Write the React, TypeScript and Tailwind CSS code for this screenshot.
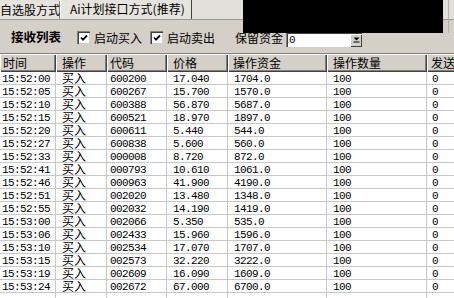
import React from "react";

const rows: [string, string, string, string, string, string, string][] = [
  ["15:52:00", "买入", "600200", "17.040", "1704.0", "100", "0"],
  ["15:52:05", "买入", "600267", "15.700", "1570.0", "100", "0"],
  ["15:52:10", "买入", "600388", "56.870", "5687.0", "100", "0"],
  ["15:52:15", "买入", "600521", "18.970", "1897.0", "100", "0"],
  ["15:52:20", "买入", "600611", "5.440", "544.0", "100", "0"],
  ["15:52:27", "买入", "600838", "5.600", "560.0", "100", "0"],
  ["15:52:33", "买入", "000008", "8.720", "872.0", "100", "0"],
  ["15:52:41", "买入", "000793", "10.610", "1061.0", "100", "0"],
  ["15:52:46", "买入", "000963", "41.900", "4190.0", "100", "0"],
  ["15:52:51", "买入", "002020", "13.480", "1348.0", "100", "0"],
  ["15:52:55", "买入", "002032", "14.190", "1419.0", "100", "0"],
  ["15:53:00", "买入", "002066", "5.350", "535.0", "100", "0"],
  ["15:53:06", "买入", "002433", "15.960", "1596.0", "100", "0"],
  ["15:53:10", "买入", "002534", "17.070", "1707.0", "100", "0"],
  ["15:53:15", "买入", "002573", "32.220", "3222.0", "100", "0"],
  ["15:53:19", "买入", "002609", "16.090", "1609.0", "100", "0"],
  ["15:53:24", "买入", "002672", "67.000", "6700.0", "100", "0"],
];

const headers = ["时间", "操作", "代码", "价格", "操作资金", "操作数量", "发送"];
const pads = ["pl-[2px]", "pl-[6px]", "pl-[3px]", "pl-[6px]", "pl-[6px]", "pl-[6px]", "pl-[5px]"];
const hpads = ["pl-[3px]", "pl-[6px]", "pl-[3px]", "pl-[6px]", "pl-[5px]", "pl-[6px]", "pl-[4px]"];

const cjk = "font-['Noto_Sans_CJK_SC',sans-serif]";
const mono = "font-['Liberation_Mono',monospace]";

function CheckBox() {
  return (
    <div className="w-[13px] h-[13px] bg-white border-t border-l border-[#808080] shadow-[inset_1px_1px_0_#404040,inset_-1px_-1px_0_#d4d0c8] flex items-center justify-center">
      <svg width="8" height="8" viewBox="0 0 8 8">
        <path d="M1 3.5 L3 5.6 L7 1.5" stroke="#000" strokeWidth="1.8" fill="none" />
      </svg>
    </div>
  );
}

export default function App() {
  return (
    <div className={`relative w-[454px] h-[298px] overflow-hidden bg-[#d4d0c8] text-black ${cjk}`}>
      {/* tab strip */}
      <div className="h-[20px] flex items-end bg-[#e2e0da] border-b border-[#9a9890]">
        <div className="w-[60px] h-[18px] flex items-center text-[12px] leading-none border-r border-[#808080] bg-[#e6e4de] whitespace-nowrap">
          自选股方式
        </div>
        <div className="w-[132px] h-[20px] flex items-center pl-[9px] text-[12px] leading-none bg-[#e6e4de] border-l border-white border-r border-r-[#404040] whitespace-nowrap">
          Ai计划接口方式(推荐)
        </div>
      </div>

      {/* control row */}
      <div className="h-[33px] flex items-center pt-[2px] text-[12px] leading-none">
        <span className="ml-[11px] font-bold text-[12.5px]">接收列表</span>
        <div className="ml-[16px]"><CheckBox /></div>
        <span className="ml-[4px]">启动买入</span>
        <div className="ml-[8px]"><CheckBox /></div>
        <span className="ml-[4px]">启动卖出</span>
        <span className="ml-[20px]">保留资金</span>
        <div className="ml-[3px] mt-[4px] w-[76px] h-[15px] bg-white border-t border-l border-[#808080] shadow-[inset_1px_1px_0_#404040] flex items-center">
          <span className={`${mono} text-[11px] pl-[2px] flex-1`}>0</span>
          <div className="w-[12px] h-[13px] bg-[#d4d0c8] shadow-[inset_1px_1px_0_#fff,inset_-1px_-1px_0_#404040] flex items-center justify-center">
            <svg width="7" height="6" viewBox="0 0 7 6">
              <path d="M0.5 0.5 H6.5 L3.5 3.5 Z" fill="#000" />
              <rect x="0.5" y="4.5" width="6" height="1" fill="#000" />
            </svg>
          </div>
        </div>
      </div>

      {/* table */}
      <div className="w-[454px] overflow-hidden border-t border-[#808080]">
        <div className="grid grid-cols-[56px_51px_60px_61px_99px_100px_60px] w-[487px]">
          {headers.map((h, i) => (
            <div
              key={h}
              className={`h-[18px] flex items-center ${hpads[i]} text-[12px] leading-none bg-[#d4d0c8] shadow-[inset_1px_1px_0_#fff,inset_-1px_-1px_0_#404040,inset_-2px_-2px_0_#808080] whitespace-nowrap overflow-hidden`}
            >
              {h}
            </div>
          ))}
          {rows.map((r, ri) =>
            r.map((c, ci) =>
              ci === 1 ? (
                <div
                  key={`${ri}-${ci}`}
                  className={`h-[13px] bg-white border-r border-b border-[#c8c8c8] ${pads[ci]} whitespace-nowrap flex items-center`}
                >
                  <span className="text-[12px] leading-none">{c}</span>
                </div>
              ) : (
                <div
                  key={`${ri}-${ci}`}
                  className={`h-[13px] bg-white border-r border-b border-[#c8c8c8] ${pads[ci]} whitespace-nowrap overflow-hidden ${mono} text-[11px] tracking-[-0.6px] leading-[13px] pt-[1px]`}
                >
                  {c}
                </div>
              )
            )
          )}
          {headers.map((h, i) => (
            <div key={`e-${i}`} className="h-[13px] bg-white border-r border-[#c8c8c8]" />
          ))}
        </div>
      </div>

      {/* redaction overlay */}
      <div className="absolute left-[243px] top-0 w-[200px] h-[33px] bg-black" />
      <div className="absolute left-[448px] top-0 w-px h-[33px] bg-[#b0b0b0]" />
    </div>
  );
}
